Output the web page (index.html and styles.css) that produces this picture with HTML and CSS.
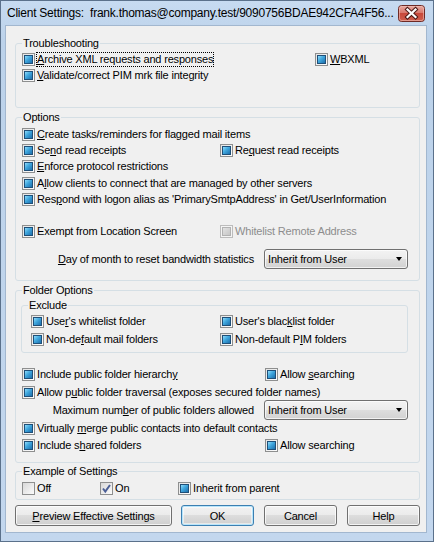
FILE: index.html
```html
<!DOCTYPE html>
<html>
<head>
<meta charset="utf-8">
<link rel="stylesheet" href="styles.css">
</head>
<body>
<div class="window">
  <div class="titlebar">
    <span class="title">Client Settings:&nbsp; frank.thomas@company.test/9090756BDAE942CFA4F56...</span>
    <span class="close">
      <svg width="27" height="17" viewBox="0 0 27 17">
        <defs>
          <linearGradient id="red" x1="0" y1="0" x2="0" y2="1">
            <stop offset="0" stop-color="#e9aba2"/>
            <stop offset="0.45" stop-color="#d9796d"/>
            <stop offset="0.5" stop-color="#c8493b"/>
            <stop offset="1" stop-color="#d0604f"/>
          </linearGradient>
        </defs>
        <rect x="0.5" y="0.5" width="26" height="16" rx="3" fill="url(#red)" stroke="#6e2a25"/>
        <rect x="1.5" y="1.5" width="24" height="14" rx="2" fill="none" stroke="#f0c2ba" stroke-opacity="0.6"/>
        <path d="M9.5 4.5 L17.5 12 M17.5 4.5 L9.5 12" stroke="#4a1814" stroke-width="4.2" stroke-linecap="square" fill="none"/>
        <path d="M9.5 4.5 L17.5 12 M17.5 4.5 L9.5 12" stroke="#ffffff" stroke-width="2.2" stroke-linecap="square" fill="none"/>
      </svg>
    </span>
  </div>
  <div class="client">
    <fieldset class="group g-trouble">
      <legend>Troubleshooting</legend>
      <div class="row split c-293">
        <label class="item"><span class="cb"></span><span class="focus"><u>A</u>rchive XML requests and responses</span></label>
        <label class="item"><span class="cb"></span><span><u>W</u>BXML</span></label>
      </div>
      <div class="row">
        <label class="item"><span class="cb"></span><span><u>V</u>alidate/correct PIM mrk file integrity</span></label>
      </div>
    </fieldset>

    <fieldset class="group g-options">
      <legend>Options</legend>
      <div class="row">
        <label class="item"><span class="cb"></span><span><u>C</u>reate tasks/reminders for flagged mail items</span></label>
      </div>
      <div class="row split c-198">
        <label class="item"><span class="cb"></span><span>Se<u>n</u>d read receipts</span></label>
        <label class="item"><span class="cb"></span><span>Re<u>q</u>uest read receipts</span></label>
      </div>
      <div class="row">
        <label class="item"><span class="cb"></span><span><u>E</u>nforce protocol restrictions</span></label>
      </div>
      <div class="row gap1">
        <label class="item"><span class="cb"></span><span>A<u>l</u>low clients to connect that are managed by other servers</span></label>
      </div>
      <div class="row">
        <label class="item"><span class="cb"></span><span>Res<u>p</u>ond with logon alias as 'PrimarySmtpAddress' in Get/UserInformation</span></label>
      </div>
      <div class="row split c-198 gap16">
        <label class="item"><span class="cb"></span><span>Exempt from Location Screen</span></label>
        <label class="item disabled"><span class="cb cb-dis"></span><span>Whitelist Remote Address</span></label>
      </div>
      <div class="combo-row gap10">
        <span class="combo-label"><u>D</u>ay of month to reset bandwidth statistics</span>
        <span class="combo"><span>Inherit from User</span><span class="arrow"></span></span>
      </div>
    </fieldset>

    <fieldset class="group g-folder">
      <legend>Folder Options</legend>
      <fieldset class="group sub">
        <legend>Exclude</legend>
        <div class="row split c-189">
          <label class="item"><span class="cb"></span><span>Use<u>r</u>'s whitelist folder</span></label>
          <label class="item"><span class="cb"></span><span>User's blac<u>k</u>list folder</span></label>
        </div>
        <div class="row split c-189 gap2">
          <label class="item"><span class="cb"></span><span>Non-de<u>f</u>ault mail folders</span></label>
          <label class="item"><span class="cb"></span><span>Non-default P<u>I</u>M folders</span></label>
        </div>
      </fieldset>
      <div class="row split c-243 gap13">
        <label class="item"><span class="cb"></span><span>Include public folder hierarch<u>y</u></span></label>
        <label class="item"><span class="cb"></span><span>Allow <u>s</u>earching</span></label>
      </div>
      <div class="row gap2">
        <label class="item"><span class="cb"></span><span>Allow p<u>u</u>blic folder traversal (exposes secured folder names)</span></label>
      </div>
      <div class="combo-row">
        <span class="combo-label">Maximum num<u>b</u>er of public folders allowed</span>
        <span class="combo"><span>Inherit from User</span><span class="arrow"></span></span>
      </div>
      <div class="row">
        <label class="item"><span class="cb"></span><span>Virtually <u>m</u>erge public contacts into default contacts</span></label>
      </div>
      <div class="row split c-243 gap1">
        <label class="item"><span class="cb"></span><span>Include s<u>h</u>ared folders</span></label>
        <label class="item"><span class="cb"></span><span>Allow searching</span></label>
      </div>
    </fieldset>

    <fieldset class="group g-example">
      <legend>Example of Settings</legend>
      <div class="row example">
        <label class="item"><span class="cb cb-off"></span><span>Off</span></label>
        <label class="item"><span class="cb cb-off cb-on"><svg width="11" height="11" viewBox="0 0 11 11"><path d="M2 5.5 L4.3 8.5 L9 2" stroke="#4b5f96" stroke-width="2" fill="none"/></svg></span><span>On</span></label>
        <label class="item"><span class="cb"></span><span>Inherit from parent</span></label>
      </div>
    </fieldset>

    <div class="buttons">
      <button class="btn wide"><u>P</u>review Effective Settings</button>
      <button class="btn default">OK</button>
      <button class="btn">Cancel</button>
      <button class="btn">Help</button>
    </div>
  </div>
</div>
</body>
</html>
```

FILE: styles.css
```css
*, *::before, *::after { box-sizing: border-box; }

html, body { margin: 0; padding: 0; background: #c4d8ee; }

body {
  font-family: "Liberation Sans", Arial, sans-serif;
  font-size: 11px;
  letter-spacing: -0.18px;
  color: #000;
}

.window {
  width: 434px;
  height: 542px;
  border: 1px solid #5b718b;
  background: linear-gradient(#c7dbf1, #bcd2ea 40px, #c3d7ee);
  padding: 0 6px 8px 4px;
  display: flex;
  flex-direction: column;
}

.titlebar {
  height: 24px;
  display: flex;
  align-items: center;
  justify-content: space-between;
  padding-left: 2px;
}

.title {
  font-family: "Liberation Sans", Arial, sans-serif;
  font-size: 12px;
  letter-spacing: -0.24px;
  white-space: nowrap;
  color: #000;
}

.close {
  display: flex;
  margin-right: 2px;
  margin-top: 1px;
}

.client {
  flex: 1;
  background: #f0f0f0;
  border: 1px solid #a2b7cf;
  padding: 11px 6px 0 9px;
  display: flex;
  flex-direction: column;
}

.group {
  margin: 0;
  border: 1px solid #d5dfe5;
  border-radius: 3px;
  padding: 0 6px;
  min-width: 0;
}

.group > legend {
  padding: 0 1px;
  line-height: 13px;
  height: 13px;
}

.g-trouble { padding-top: 1px; padding-bottom: 24px; }
.g-options { margin-top: 3px; padding-top: 2px; padding-bottom: 11px; }
.g-folder { margin-top: 3px; padding-top: 2px; padding-bottom: 9px; }
.g-example { margin-top: 2px; padding-top: 2px; padding-bottom: 3px; }

.sub {
  margin: 0 5px 0 -1px;
  padding: 1px 9px 5px;
}
.sub > legend { margin-left: -3px; }

.row {
  height: 16px;
  display: flex;
  align-items: center;
}

.split {
  display: grid;
  align-items: center;
}
.c-293 { grid-template-columns: 293px auto; }
.c-198 { grid-template-columns: 198px auto; }
.c-189 { grid-template-columns: 189px auto; }
.c-243 { grid-template-columns: 243px auto; }

.example {
  display: grid;
  grid-template-columns: 78px 78px auto;
}

.gap1 { margin-top: 1px; }
.gap2 { margin-top: 2px; }
.gap10 { margin-top: 10px; }
.gap13 { margin-top: 13px; }
.gap16 { margin-top: 16px; }

.item {
  display: flex;
  align-items: center;
  white-space: nowrap;
}

.cb {
  width: 13px;
  height: 13px;
  flex: none;
  border: 1px solid #8e8f8f;
  padding: 1px;
  margin-right: 2px;
  background: linear-gradient(135deg, #e4e4e4, #fdfdfd);
  display: flex;
}

.cb::after {
  content: "";
  display: block;
  flex: none;
  width: 9px;
  height: 9px;
  border: 1px solid #1f4f78;
  background: linear-gradient(135deg, #8fdcfb 0%, #3fa6dd 45%, #1d6fac 100%);
}

.cb-off { background: linear-gradient(135deg, #d8d8d8, #fbfbfb); }
.cb-off::after { display: none; }
.cb-on { padding: 0; }

.cb-dis {
  border-color: #bcbcbc;
  background: #f4f4f4;
}
.cb-dis::after {
  border-color: #b2b2b2;
  background: linear-gradient(135deg, #e2e2e2, #c6c6c6);
}

.disabled { color: #8d8d8d; }

.focus {
  outline: 1px dotted #000;
  line-height: 13px;
}

u { text-decoration: underline; }

.combo-row {
  height: 20px;
  display: grid;
  grid-template-columns: 1fr 144px;
  column-gap: 10px;
  margin-right: 5px;
  align-items: center;
}

.combo-label {
  text-align: right;
  white-space: nowrap;
}

.combo {
  height: 20px;
  border: 1px solid #707070;
  border-radius: 3px;
  background: linear-gradient(#f3f3f3 0%, #ebebeb 50%, #dedede 50%, #d2d2d2 100%);
  box-shadow: inset 0 0 0 1px rgba(255, 255, 255, 0.7);
  display: flex;
  align-items: center;
  justify-content: space-between;
  padding: 0 5px 0 3px;
}

.arrow {
  width: 0;
  height: 0;
  border-left: 3.5px solid transparent;
  border-right: 3.5px solid transparent;
  border-top: 4px solid #000;
}

.buttons {
  display: flex;
  margin-top: 5px;
  gap: 10px;
}

.btn {
  height: 21px;
  width: 73px;
  padding: 0;
  font-family: "Liberation Sans", Arial, sans-serif;
  font-size: 11px;
  letter-spacing: -0.18px;
  color: #000;
  border: 1px solid #707070;
  border-radius: 3px;
  background: linear-gradient(#f2f2f2 0%, #ebebeb 50%, #dddddd 50%, #cfcfcf 100%);
  box-shadow: inset 0 0 0 1px rgba(255, 255, 255, 0.75);
}

.wide {
  width: 157px;
  margin-right: -1px;
}

.default {
  border-color: #3c7fb1;
  box-shadow: inset 0 0 0 1px #b8e5fb, inset 0 0 0 2px rgba(255, 255, 255, 0.5);
}
```
